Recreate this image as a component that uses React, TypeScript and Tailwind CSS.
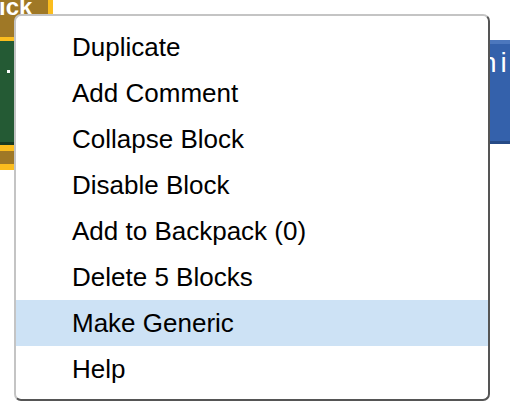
import React from 'react';

const items = [
  'Duplicate',
  'Add Comment',
  'Collapse Block',
  'Disable Block',
  'Add to Backpack (0)',
  'Delete 5 Blocks',
  'Make Generic',
  'Help',
];

export default function App() {
  return (
    <div
      className="relative w-[510px] h-[418px] bg-white overflow-hidden"
      style={{ fontFamily: '"Liberation Sans", Arial, sans-serif' }}
    >
      {/* blocks on the workspace, behind the menu */}
      <div className="absolute left-0 top-0 flex flex-col">
        <div className="w-[53px] h-[41px] bg-[#fbbd1e] flex items-start">
          <div className="w-[48px] h-[37px] bg-[#9f7826] overflow-hidden flex items-start">
            <span className="mt-[-5px] ml-[-1px] text-[24px] font-bold text-white leading-none whitespace-nowrap">ick</span>
          </div>
        </div>
        <div className="w-[20px] h-[101px] bg-[#245a34] pt-[29px] pl-[7px]">
          <div className="w-[3px] h-[3px] bg-white" />
        </div>
        <div className="w-[20px] h-[3px] bg-[#173a21]" />
        <div className="w-[20px] h-[25px] bg-[#fbbd1e] py-[6px]">
          <div className="h-[13px] bg-[#9f7826]" />
        </div>
      </div>

      <div className="absolute left-[480px] top-[40px] w-[30px] h-[104px] bg-[#3461ab] flex flex-col">
        <div className="h-[4px] bg-[#4c77bd]" />
        <div className="flex-1 pt-[5px] pl-[1px] flex items-start gap-[4px] overflow-hidden text-[28px] text-white leading-none">
          <span>n</span>
          <span>i</span>
        </div>
        <div className="h-[3px] bg-[#264a86]" />
      </div>

      {/* context menu */}
      <div className="absolute left-[14px] top-[14px] w-[476px] h-[387px] bg-white rounded-[7px] border-2 border-t-[#c4c4c4] border-l-[#c4c4c4] border-r-[#555555] border-b-[#555555] pt-2 flex flex-col">
        {items.map((label) => (
          <div
            key={label}
            className={`h-[46px] flex items-center pl-[56px] text-[26px] text-black ${
              label === 'Make Generic' ? 'bg-[#cde2f5]' : ''
            }`}
          >
            {label}
          </div>
        ))}
      </div>
    </div>
  );
}
